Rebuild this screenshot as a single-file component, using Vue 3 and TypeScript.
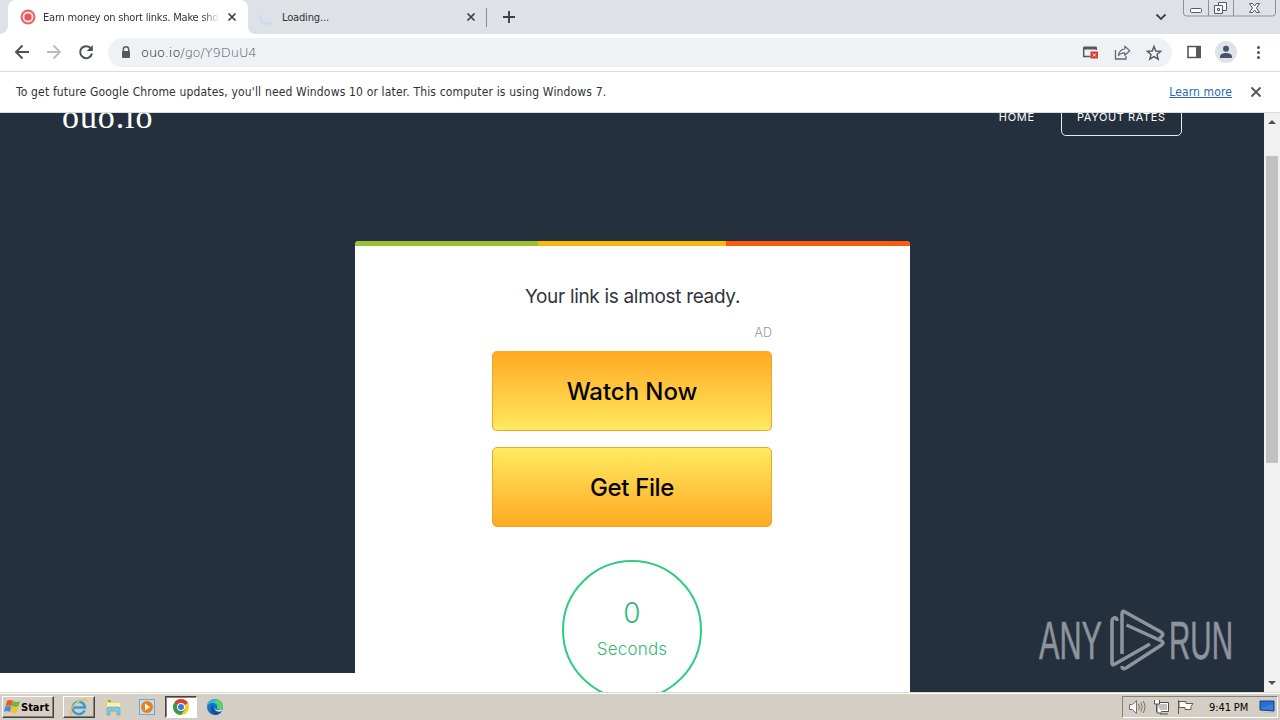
<script setup lang="ts">
const tabTitle = 'Earn money on short links. Make sho'
const choices = [
  { label: 'Watch Now', kind: 'watch' },
  { label: 'Get File', kind: 'file' },
]
</script>

<template>
  <div class="screen">
    <header class="tabs">
      <div class="tab active">
        <svg class="favicon" width="16" height="16" viewBox="0 0 16 16"><circle cx="8" cy="8" r="6.500" fill="#fbdcdc" stroke="#df6467" stroke-width="2"/><circle cx="8" cy="8" r="3.600" fill="#ee5558"/></svg>
        <span class="tab-title t1">{{ tabTitle }}</span>
        <svg class="tab-close" width="10" height="10" viewBox="0 0 10 10"><path d="M1.5 1.5l7 7M8.500 1.500l-7 7" stroke="#3c4043" stroke-width="1.700"/></svg>
        <svg class="foot" width="8" height="8" viewBox="0 0 8 8"><path d="M0 0Q0 8 8 8H0Z" fill="#fff"/></svg>
      </div>
      <div class="tab idle">
        <svg class="favicon" width="16" height="16" viewBox="0 0 16 16"><path d="M1.500 6A7 7 0 0 0 13 13" fill="none" stroke="#c9d7f6" stroke-width="1.700"/></svg>
        <span class="tab-title t2">Loading...</span>
        <svg class="tab-close" width="10" height="10" viewBox="0 0 10 10"><path d="M1.500 1.500l7 7M8.500 1.500l-7 7" stroke="#3c4043" stroke-width="1.700"/></svg>
      </div>
      <svg class="plus" width="14" height="14" viewBox="0 0 14 14"><path d="M7 1v12M1 7h12" stroke="#3c4043" stroke-width="1.900"/></svg>
      <svg class="chev" width="12" height="8" viewBox="0 0 12 8"><path d="M1.500 1.500L6 6l4.500-4.500" fill="none" stroke="#3c4043" stroke-width="1.800"/></svg>
      <svg class="winbtns" width="94" height="18" viewBox="0 0 94 18">
        <path d="M.5 0v13q0 3 3 3h86q3 0 3-3V0M25.500 0v16M50.500 0v16" fill="none" stroke="#8d9299"/>
        <g fill="#f8f9fb" stroke="#565b63"><rect x="7.500" y="8.500" width="11" height="4" rx="1"/><path d="M35.500 2.500h8v8h-8z"/><path d="M31.500 5.500h8v8h-8z"/><path d="M34.500 8.500h2v2h-2z"/><path d="M66.500 3.500h3l2 2.500 2-2.500h3L73.500 8l3 4.500h-3l-2-2.500-2 2.500h-3l3-4.500z"/></g>
      </svg>
    </header>

    <nav class="toolbar">
      <svg class="nav-icons" width="104" height="37" viewBox="0 0 104 37">
        <path d="M29 18H16M22.500 11.500L16 18l6.500 6.500" fill="none" stroke="#4d5156" stroke-width="1.900"/>
        <path d="M47 18h13M53.500 11.500L60 18l-6.500 6.500" fill="none" stroke="#babcbe" stroke-width="1.800"/>
        <path d="M91 14.600A6 6 0 1 0 92 19.500" fill="none" stroke="#4d5156" stroke-width="2"/><path d="M92.800 11v6h-6z" fill="#4d5156"/>
      </svg>
      <div class="omnibox">
        <svg class="lock" width="10" height="13" viewBox="0 0 10 13"><path d="M2.300 6V3.500a2.700 2.700 0 0 1 5.400 0V6" fill="none" stroke="#55595e" stroke-width="1.400"/><rect x="1" y="5" width="8" height="7" rx="1" fill="#55595e"/></svg>
        <span class="url"><b>ouo.io</b>/go/Y9DuU4</span>
        <svg class="omni-icons" width="84" height="29" viewBox="0 0 84 29">
          <path d="M1.700 10v8.500h7M14.300 12v-2" fill="none" stroke="#55595e" stroke-width="1.500"/><rect x="1" y="8.500" width="14" height="3" rx="1" fill="#55595e"/><rect x="8.500" y="13.500" width="7.500" height="7" fill="#d93a30"/><path d="M10.800 15.500l3 3M13.800 15.500l-3 3" stroke="#fff" stroke-width="1"/>
          <path d="M33.500 12v9h10.500v-3" fill="none" stroke="#666a6f" stroke-width="1.300"/><path d="M36.500 17.500c.6-4.300 3-6.300 6.300-6.500V8.200l5 4.600-5 4.500v-2.500c-2.700-.1-4.700.7-6.300 2.700z" fill="none" stroke="#666a6f" stroke-width="1.200" stroke-linejoin="round"/>
          <path d="M72 8.500l1.800 4.500 4.900.4-3.700 3.100 1.200 4.700-4.200-2.600-4.200 2.600 1.200-4.700-3.700-3.100 4.900-.4z" fill="none" stroke="#55595e" stroke-width="1.400"/>
        </svg>
      </div>
      <svg class="tools" width="108" height="37" viewBox="0 0 108 37">
        <path d="M16 12.500h12v11H16z" fill="none" stroke="#55595e" stroke-width="1.600"/><path d="M24 12h5v12h-5z" fill="#55595e"/>
        <circle cx="54" cy="18" r="11" fill="#dfe2e8"/><circle cx="54" cy="14.800" r="3" fill="#47536d"/><path d="M48 24v-1.500c0-2.500 3.500-3.500 6-3.500s6 1 6 3.500V24z" fill="#47536d"/>
        <g fill="#4d5156"><circle cx="86.500" cy="13.500" r="1.500"/><circle cx="86.500" cy="18.500" r="1.500"/><circle cx="86.500" cy="23.500" r="1.500"/></g>
      </svg>
    </nav>

    <aside class="infobar">
      <span class="notice">To get future Google Chrome updates, you'll need Windows 10 or later. This computer is using Windows 7.</span>
      <a class="more">Learn more</a>
      <svg width="12" height="12" viewBox="0 0 12 12"><path d="M1.500 1.500l9 9M10.500 1.500l-9 9" stroke="#55595e" stroke-width="1.900"/></svg>
    </aside>

    <main class="page">
      <section class="site">
        <div class="site-head">
          <span class="brand">ouo.io</span>
          <span class="home">HOME</span>
          <span class="rates"><span>PAYOUT RATES</span></span>
        </div>
        <article class="card">
          <div class="stripes"><i></i><i></i><i></i></div>
          <h1><span>Your link is almost ready.</span></h1>
          <div class="ad">AD</div>
          <button v-for="c in choices" :key="c.kind" :class="c.kind"><span>{{ c.label }}</span></button>
          <div class="timer"><span class="count">0</span><span class="unit">Seconds</span></div>
        </article>
        <div class="status"></div>
        <svg class="mark" width="200" height="72" viewBox="0 0 200 72">
          <text x="3" y="53" textLength="63" lengthAdjust="spacingAndGlyphs">ANY</text>
          <text x="133" y="53" textLength="64" lengthAdjust="spacingAndGlyphs">RUN</text>
          <g fill="none" stroke="#8d949c" stroke-width="3.500" stroke-linejoin="round">
            <path d="M81 15q0-4-3-3-2 1-2 3v42q0 3 3 1l35-20"/>
            <path d="M86 48V8q0-4 3-2l36 20q3 2 1 4-1 2-3 1"/>
            <path d="M90.500 19l35 16q3 2 0 4L90 62q-4 2-4-2"/>
          </g>
        </svg>
      </section>
      <div class="scroll">
        <svg width="16" height="15" viewBox="0 0 16 15"><path d="M4 11l4-4 4 4z" fill="#505050"/></svg>
        <div class="thumb"></div>
        <svg class="down" width="16" height="15" viewBox="0 0 16 15"><path d="M4 4l4 4 4-4z" fill="#505050"/></svg>
      </div>
    </main>

    <footer class="taskbar">
      <div class="start">
        <svg width="17" height="16" viewBox="0 0 17 16"><path d="M3 2q3-2 6 0L7.500 7q-3-1-6 0z" fill="#e65b2b"/><path d="M9 2q4 2 7 0l-1.500 5q-3 2-7 0z" fill="#70b63e"/><path d="M1.300 7.500q3-1 6 0L6 13q-3-2-6 0z" fill="#3d8fda"/><path d="M7.500 7.500q3 2 7 0L13 13q-3 2-7 0z" fill="#f7be2c"/></svg>
        <b>Start</b>
      </div>
      <div class="task raised"><svg width="20" height="20" viewBox="0 0 20 20"><path d="M15.500 13.500A6.200 6.200 0 1 1 16 10.500H5" fill="none" stroke="#389bdc" stroke-width="2.500"/><path d="M3 18C-1 15 5 5 13 3q5-1.500 5 2" fill="none" stroke="#eebb39" stroke-width="1.600"/><path d="M5 9q1-4 5-4" fill="none" stroke="#9bdcf8"/></svg></div>
      <div class="task"><svg width="20" height="20" viewBox="0 0 20 20"><path d="M3 3h5l1 2h7v11H3z" fill="#edcf70"/><path d="M4 6h13v4H4z" fill="#fbf1b7"/><path d="M5 4h3" stroke="#71b765" stroke-width="2"/><path d="M4 18v-6q0-2 2-2h9q2 0 2 2v6h-3v-4H7v4z" fill="#80c7e9" stroke="#579dbd" stroke-width=".6"/></svg></div>
      <div class="task"><svg width="18" height="18" viewBox="0 0 18 18"><rect x="1.500" y="1.500" width="15" height="15" fill="#bddff5" stroke="#70a8cd"/><circle cx="9" cy="9" r="6" fill="#ef7e16"/><path d="M7 5.500l5 3.500-5 3.500z" fill="#fff"/></svg></div>
      <div class="task pressed"><svg width="18" height="18" viewBox="0 0 18 18"><circle cx="9" cy="9" r="8" fill="#f5c92e"/><path d="M9 9L2.100 5A8 8 0 0 1 16 5z" fill="#dc4135"/><path d="M9 9L2.100 5A8 8 0 0 0 9 17l4-6z" fill="#36984b"/><circle cx="9" cy="9" r="4" fill="#fff"/><circle cx="9" cy="9" r="3" fill="#337be3"/></svg></div>
      <div class="task"><svg width="18" height="18" viewBox="0 0 18 18"><circle cx="9" cy="9" r="8" fill="#1673c5"/><path d="M1 8C2-1 16-1 17 8c0 5-6 4-6 2 2-4-6-8-10-2z" fill="#35b7cf"/><path d="M11 1.300C16 3 17 6 17 8q0 3-3 3l-3-1c2-3 0-5-3-6z" fill="#61cf60"/><path d="M8 7c-2 4 1 8 7 6h1q-3 4-7 4C3 15 4 8 8 7z" fill="#174f9b"/><path d="M9 8c-1 4 3 5 7 3v2c-5 2-8-1-7-5z" fill="#d9e0e3"/></svg></div>
      <div class="tray">
        <svg width="76" height="20" viewBox="0 0 76 20">
          <g fill="#fff" stroke="#77736e"><path d="M6.500 7.500h3l4-4v13l-4-4h-3z"/><path d="M15.500 7q2 3 0 6M17.800 5.500q3 4.500 0 9M20 4q4 6 0 12" fill="none"/><path d="M33.500 5.500h12v9h-12zM37 17h8" stroke="#55514e"/><path d="M35 7h9v6h-9z" fill="#c3c0bd" stroke="none"/><path d="M31.500 3v4h5V3M34 7v9h5" stroke="#55514e"/><path d="M55.500 3v14M56 4.500h7v2h7l-2 3v3h-6v-2h-6z" stroke="#605c58"/></g>
        </svg>
        <span>9:41 PM</span>
        <svg class="desk" width="17" height="15" viewBox="0 0 17 15"><path d="M1 1h14v10l-14-1z" fill="#286fd3" stroke="#173e82"/><path d="M2 8L14 4v6L2 9z" fill="#397fda"/><path d="M3 12h11l2 1H5z" fill="#a8c3dd"/></svg>
      </div>
    </footer>
  </div>
</template>

<style>
body { margin: 0; overflow: hidden; }
</style>
<style scoped>
* { box-sizing: border-box; }
svg { display: block; flex: none; }
.screen { width: 1280px; height: 720px; overflow: hidden; background: #fff; color: #303236; font: 11px "DejaVu Sans Condensed", "DejaVu Sans", sans-serif; font-stretch: condensed; white-space: nowrap; }
.tabs { height: 34px; display: flex; background: #dee1e6; align-items: flex-start; }
.tab { height: 34px; display: flex; align-items: center; position: relative; }
.active { width: 240px; margin-left: 8px; padding-left: 12px; background: #fff; border-radius: 8px 8px 0 0; }
.active::before { content: ""; position: absolute; left: -8px; bottom: 0; width: 8px; height: 8px; background: radial-gradient(circle at 0 0, #dee1e6 7.500px, #fff 8px); }
.foot { position: absolute; left: 240px; bottom: 0; }
.idle { width: 239px; padding-left: 11px; }
.idle::after { content: ""; position: absolute; right: 0; top: 8px; width: 1px; height: 19px; background: #858991; }
.tab-title { overflow: hidden; }
.t1 { width: 177px; margin-left: 7px; letter-spacing: -.2px; -webkit-mask-image: linear-gradient(90deg, #000 90%, transparent); mask-image: linear-gradient(90deg, #000 90%, transparent); }
.t2 { width: 184px; margin-left: 7px; letter-spacing: -.15px; }
.active .tab-close { margin-left: 7px; }
.idle .tab-close { margin-left: 0; }
.plus { margin: 10px 0 0 15px; }
.chev { margin: 13px 16px 0 auto; }
.winbtns { margin-right: 3px; }
.toolbar { height: 38px; display: flex; border-bottom: 1px solid #d9dbde; }
.omnibox { width: 1064px; height: 29px; margin: 4px 0 0 4px; padding-left: 13px; background: #eff2f5; border-radius: 15px; display: flex; align-items: center; color: #55595e; }
.url { margin-left: 10px; font: 200 13px "DejaVu Sans Light", "DejaVu Sans", sans-serif; letter-spacing: -.05px; }
.url b { font-weight: 200; color: #000; }
.omni-icons { margin: 0 6px 0 auto; }
.infobar { height: 41px; padding: 0 18px 1px 16px; display: flex; align-items: center; border-bottom: 1px solid #d5dfdd; font-size: 12px; }
.notice { letter-spacing: .163px; }
.more { margin: 0 18px 0 auto; letter-spacing: .12px; color: #286bad; text-decoration: underline; }
.page { height: 579px; display: flex; }
.site { width: 1264px; background: #25303e; position: relative; overflow: hidden; font-family: Inter, sans-serif; font-stretch: normal; }
.site-head { height: 128px; display: flex; align-items: flex-start; color: #fff; }
.brand { margin: -14px 0 0 62px; font: 34px/36px "Liberation Serif", serif; letter-spacing: .9px; }
.home { margin: -3px 26px 0 auto; font-size: 11px; line-height: 14px; letter-spacing: .8px; }
.rates { width: 121px; height: 40px; margin: -17px 82px 0 0; border: 1px solid #e8ebee; border-radius: 5px; padding: 13px 0 0 15px; font-size: 11px; line-height: 14px; letter-spacing: .6px; }
.card { height: 470px; width: 555px; margin-left: 355px; background: #fff; border-radius: 4px 4px 0 0; overflow: hidden; }
.stripes { height: 5px; display: grid; grid-template-columns: 183px 188px 184px; }
.stripes i { background: #9ac131; }
.stripes i:nth-child(2) { background: #f7b90b; }
.stripes i:nth-child(3) { background: #fa5b0f; }
h1 { margin: 38px 0 0; height: 26px; text-align: center; color: #30353e; font: 400 19px/26px Inter, sans-serif; letter-spacing: -.32px; }
.ad { margin: 14px 138px 0 0; height: 19px; text-align: right; font-size: 12.500px; line-height: 17px; color: #999; font-weight: 300; }
button { display: flex; align-items: center; justify-content: center; width: 280px; height: 80px; padding: 1px 0 0; margin: 8px 0 16px 137px; border: 1px solid #e7aa25; border-radius: 5px; color: #050505; font: 500 24px Inter, sans-serif; }
.watch { background: linear-gradient(#ffa922, #ffe960); border-top-color: #ffa922; letter-spacing: -.05px; }
.file { background: linear-gradient(#ffeb62, #ffa922); margin-top: 0; letter-spacing: -.35px; }
.timer { width: 140px; height: 140px; margin: 33px 0 0 207px; border: 2px solid #2ecc80; border-radius: 50%; display: flex; flex-direction: column; align-items: center; color: #35b975; font-weight: 300; }
.count { margin-top: 33px; font-size: 28px; line-height: 36px; }
.unit { margin-top: 7px; font-size: 17px; line-height: 22px; letter-spacing: .2px; }
.status { position: absolute; left: 0; bottom: 0; width: 355px; height: 19px; background: #fff; }
.mark { position: absolute; left: 1036px; top: 493px; }
.mark text { font: 53px "Liberation Sans", sans-serif; fill: #8d949c; stroke: #8d949c; stroke-width: .6px; }
.scroll { width: 16px; background: #f1f1f1; display: flex; flex-direction: column; }
.thumb { width: 12px; height: 307px; margin: 28px 0 0 2px; background: #c1c1c1; }
.down { margin-top: auto; }
.taskbar { height: 28px; display: flex; align-items: flex-start; padding: 4px 0 0 2px; background: #d5cec5; box-shadow: inset 0 1px #ddd8ce, inset 0 2px #fff; }
.start { width: 52px; height: 22px; padding-left: 1px; display: flex; align-items: center; border: 1px solid; border-color: #fff #454341 #454341 #fff; box-shadow: inset -1px -1px #88827b; color: #000; margin-right: 9px; }
.start b { font: bold 11px "DejaVu Sans Condensed", sans-serif; }
.task { width: 32px; height: 22px; margin-right: 2px; display: grid; place-items: center; }
.raised { border: 1px solid; border-color: #fff #454341 #454341 #fff; box-shadow: inset -1px -1px #88827b; }
.pressed { border: 1px solid; border-color: #454341 #fff #fff #454341; background: #fff; box-shadow: inset 1px 1px #88827b; }
.tray { margin: 0 2px 0 auto; width: 156px; height: 22px; border: 1px solid; border-color: #85807a #fff #fff #85807a; display: flex; align-items: center; color: #000; }
.tray span { margin-left: 10px; letter-spacing: -.1px; }
.desk { margin: 0 1px 0 auto; }
</style>
